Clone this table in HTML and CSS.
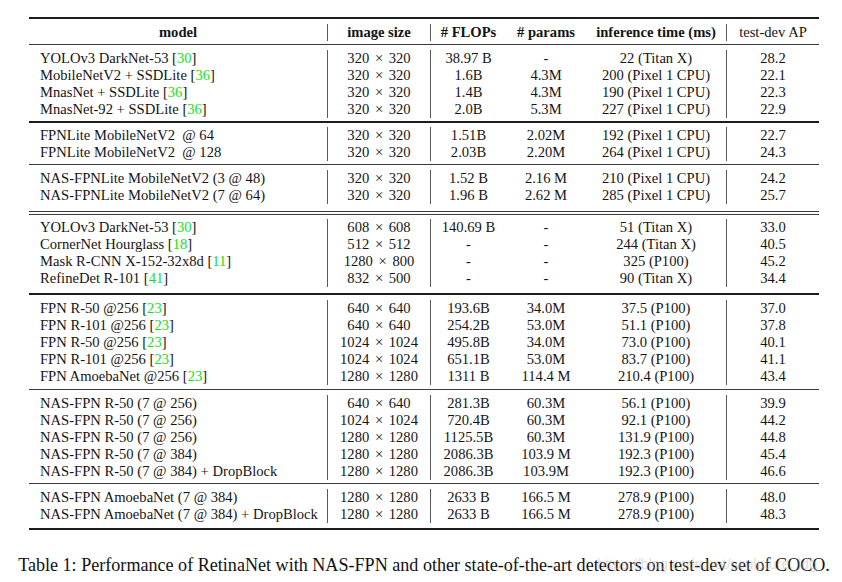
FILE: index.html
```html
<!DOCTYPE html>
<html>
<head>
<meta charset="utf-8">
<link rel="stylesheet" href="styles.css">
</head>
<body>
<div class="page">
  <table class="results">
    <colgroup>
      <col class="c-model"><col class="c-size"><col class="c-flops"><col class="c-params"><col class="c-time"><col class="c-ap">
    </colgroup>
    <tbody>
      <tr class="rule top"><td colspan="6"><div class="line"></div></td></tr>
      <tr class="head">
        <th class="model">model</th><th class="vl">image size</th><th class="vl"># FLOPs</th><th># params</th><th>inference time (ms)</th><th class="vl normal">test-dev AP</th>
      </tr>
      <tr class="rule"><td colspan="6"><div class="line"></div></td></tr>

      <tr><td class="model">YOLOv3 DarkNet-53 [<span class="cite">30</span>]</td><td class="vl">320 <span class="x">×</span> 320</td><td class="vl">38.97 B</td><td>-</td><td>22 (Titan X)</td><td class="vl">28.2</td></tr>
      <tr><td class="model">MobileNetV2 + SSDLite [<span class="cite">36</span>]</td><td class="vl">320 <span class="x">×</span> 320</td><td class="vl">1.6B</td><td>4.3M</td><td>200 (Pixel 1 CPU)</td><td class="vl">22.1</td></tr>
      <tr><td class="model">MnasNet + SSDLite [<span class="cite">36</span>]</td><td class="vl">320 <span class="x">×</span> 320</td><td class="vl">1.4B</td><td>4.3M</td><td>190 (Pixel 1 CPU)</td><td class="vl">22.3</td></tr>
      <tr><td class="model">MnasNet-92 + SSDLite [<span class="cite">36</span>]</td><td class="vl">320 <span class="x">×</span> 320</td><td class="vl">2.0B</td><td>5.3M</td><td>227 (Pixel 1 CPU)</td><td class="vl">22.9</td></tr>
      <tr class="rule thick"><td colspan="6"><div class="line"></div></td></tr>

      <tr><td class="model">FPNLite MobileNetV2&nbsp; @ 64</td><td class="vl">320 <span class="x">×</span> 320</td><td class="vl">1.51B</td><td>2.02M</td><td>192 (Pixel 1 CPU)</td><td class="vl">22.7</td></tr>
      <tr><td class="model">FPNLite MobileNetV2&nbsp; @ 128</td><td class="vl">320 <span class="x">×</span> 320</td><td class="vl">2.03B</td><td>2.20M</td><td>264 (Pixel 1 CPU)</td><td class="vl">24.3</td></tr>
      <tr class="rule"><td colspan="6"><div class="line"></div></td></tr>

      <tr><td class="model">NAS-FPNLite MobileNetV2 (3 @ 48)</td><td class="vl">320 <span class="x">×</span> 320</td><td class="vl">1.52 B</td><td>2.16 M</td><td>210 (Pixel 1 CPU)</td><td class="vl">24.2</td></tr>
      <tr><td class="model">NAS-FPNLite MobileNetV2 (7 @ 64)</td><td class="vl">320 <span class="x">×</span> 320</td><td class="vl">1.96 B</td><td>2.62 M</td><td>285 (Pixel 1 CPU)</td><td class="vl">25.7</td></tr>
      <tr class="rule double"><td colspan="6"><div class="line"></div><div class="line second"></div></td></tr>

      <tr><td class="model">YOLOv3 DarkNet-53 [<span class="cite">30</span>]</td><td class="vl">608 <span class="x">×</span> 608</td><td class="vl">140.69 B</td><td>-</td><td>51 (Titan X)</td><td class="vl">33.0</td></tr>
      <tr><td class="model">CornerNet Hourglass [<span class="cite">18</span>]</td><td class="vl">512 <span class="x">×</span> 512</td><td class="vl">-</td><td>-</td><td>244 (Titan X)</td><td class="vl">40.5</td></tr>
      <tr><td class="model">Mask R-CNN X-152-32x8d [<span class="cite">11</span>]</td><td class="vl">1280 <span class="x">×</span> 800</td><td class="vl">-</td><td>-</td><td>325 (P100)</td><td class="vl">45.2</td></tr>
      <tr><td class="model">RefineDet R-101 [<span class="cite">41</span>]</td><td class="vl">832 <span class="x">×</span> 500</td><td class="vl">-</td><td>-</td><td>90 (Titan X)</td><td class="vl">34.4</td></tr>
      <tr class="rule thick loose"><td colspan="6"><div class="line"></div></td></tr>

      <tr><td class="model">FPN R-50 @256 [<span class="cite">23</span>]</td><td class="vl">640 <span class="x">×</span> 640</td><td class="vl">193.6B</td><td>34.0M</td><td>37.5 (P100)</td><td class="vl">37.0</td></tr>
      <tr><td class="model">FPN R-101 @256 [<span class="cite">23</span>]</td><td class="vl">640 <span class="x">×</span> 640</td><td class="vl">254.2B</td><td>53.0M</td><td>51.1 (P100)</td><td class="vl">37.8</td></tr>
      <tr><td class="model">FPN R-50 @256 [<span class="cite">23</span>]</td><td class="vl">1024 <span class="x">×</span> 1024</td><td class="vl">495.8B</td><td>34.0M</td><td>73.0 (P100)</td><td class="vl">40.1</td></tr>
      <tr><td class="model">FPN R-101 @256 [<span class="cite">23</span>]</td><td class="vl">1024 <span class="x">×</span> 1024</td><td class="vl">651.1B</td><td>53.0M</td><td>83.7 (P100)</td><td class="vl">41.1</td></tr>
      <tr><td class="model">FPN AmoebaNet @256 [<span class="cite">23</span>]</td><td class="vl">1280 <span class="x">×</span> 1280</td><td class="vl">1311 B</td><td>114.4 M</td><td>210.4 (P100)</td><td class="vl">43.4</td></tr>
      <tr class="rule loose"><td colspan="6"><div class="line"></div></td></tr>

      <tr><td class="model">NAS-FPN R-50 (7 @ 256)</td><td class="vl">640 <span class="x">×</span> 640</td><td class="vl">281.3B</td><td>60.3M</td><td>56.1 (P100)</td><td class="vl">39.9</td></tr>
      <tr><td class="model">NAS-FPN R-50 (7 @ 256)</td><td class="vl">1024 <span class="x">×</span> 1024</td><td class="vl">720.4B</td><td>60.3M</td><td>92.1 (P100)</td><td class="vl">44.2</td></tr>
      <tr><td class="model">NAS-FPN R-50 (7 @ 256)</td><td class="vl">1280 <span class="x">×</span> 1280</td><td class="vl">1125.5B</td><td>60.3M</td><td>131.9 (P100)</td><td class="vl">44.8</td></tr>
      <tr><td class="model">NAS-FPN R-50 (7 @ 384)</td><td class="vl">1280 <span class="x">×</span> 1280</td><td class="vl">2086.3B</td><td>103.9 M</td><td>192.3 (P100)</td><td class="vl">45.4</td></tr>
      <tr><td class="model">NAS-FPN R-50 (7 @ 384) + DropBlock</td><td class="vl">1280 <span class="x">×</span> 1280</td><td class="vl">2086.3B</td><td>103.9M</td><td>192.3 (P100)</td><td class="vl">46.6</td></tr>
      <tr class="rule"><td colspan="6"><div class="line"></div></td></tr>

      <tr><td class="model">NAS-FPN AmoebaNet (7 @ 384)</td><td class="vl">1280 <span class="x">×</span> 1280</td><td class="vl">2633 B</td><td>166.5 M</td><td>278.9 (P100)</td><td class="vl">48.0</td></tr>
      <tr><td class="model">NAS-FPN AmoebaNet (7 @ 384) + DropBlock</td><td class="vl">1280 <span class="x">×</span> 1280</td><td class="vl">2633 B</td><td>166.5 M</td><td>278.9 (P100)</td><td class="vl">48.3</td></tr>
      <tr class="rule bottom"><td colspan="6"><div class="line"></div></td></tr>
    </tbody>
  </table>
  <p class="caption">Table 1: Performance of RetinaNet with NAS-FPN and other state-of-the-art detectors on test-dev set of COCO.</p>
  <span class="watermark">https://blog.csdn.net/sculpture_ldg</span>
</div>
</body>
</html>
```

FILE: styles.css
```css
html, body {
  margin: 0;
  padding: 0;
  background: #ffffff;
}

.page {
  position: relative;
  width: 832px;
  height: 582px;
  margin-left: 8px;
  padding-top: 17px;
  box-sizing: border-box;
  display: flex;
  flex-direction: column;
  align-items: center;
  font-family: "Liberation Serif", "Times New Roman", serif;
  color: #141414;
}

.results {
  width: 790px;
  table-layout: fixed;
  border-collapse: separate;
  border-spacing: 0;
  font-size: 14.6px;
}

.c-model { width: 298px; }
.c-size { width: 103px; }
.c-flops { width: 76px; }
.c-params { width: 80px; }
.c-time { width: 140px; }
.c-ap { width: 93px; }

.results td,
.results th {
  padding: 0;
  height: 17px;
  line-height: 17px;
  text-align: center;
  white-space: nowrap;
  font-weight: normal;
}

.results .head th {
  font-weight: bold;
}

.results .head th.normal {
  font-weight: normal;
}

.results .model {
  text-align: left;
  padding-left: 11px;
}

.results .head th.model {
  text-align: center;
  padding-left: 0;
}

.results .vl {
  border-left: 1px solid #5a5a5a;
}

.x {
  margin: 0 2px;
}

.cite {
  color: #16e016;
}

/* horizontal rules */
.results .rule td {
  height: auto;
  line-height: 0;
  padding: 3px 0 5px;
}

.rule .line {
  height: 1px;
  background: #3a3a3a;
}

.rule.thick .line,
.rule.top .line,
.rule.bottom .line {
  height: 2px;
  background: #1c1c1c;
}

.results .rule.top td {
  padding: 0 0 5px;
}

.results .rule.thick td {
  padding: 3px 0 4px;
}

.results .rule.thick.loose td {
  padding: 6px 0 5px;
}

.results .rule.loose td {
  padding: 4px 0 5px;
}

.results .rule.double td {
  padding: 7px 0 4px;
}

.rule .line.second {
  margin-top: 2px;
}

.results .rule.bottom td {
  padding: 5px 0 0;
}

.caption {
  margin: 25px 0 0;
  font-size: 18.1px;
  line-height: 21px;
  white-space: nowrap;
  color: #111;
}

.watermark {
  position: absolute;
  left: 589px;
  top: 555px;
  font-family: "Liberation Sans", Arial, sans-serif;
  font-size: 14.5px;
  line-height: 18px;
  color: rgba(190, 190, 190, 0.5);
  white-space: nowrap;
}
```
